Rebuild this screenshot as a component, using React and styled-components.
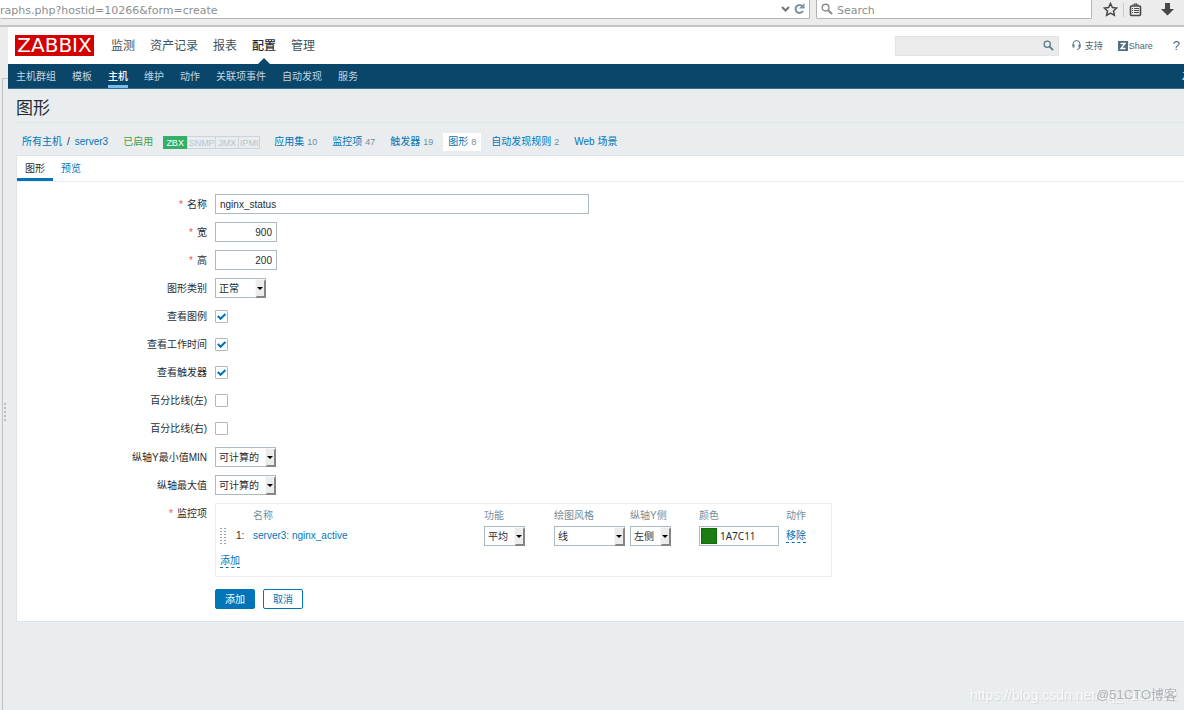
import React, { useState } from "react";
import styled, { createGlobalStyle, css } from "styled-components";

const GlobalStyle = createGlobalStyle`
  * {
    box-sizing: border-box;
  }
  body {
    margin: 0;
    background-color: #e9edf0;
    color: #1f2c33;
    font: 10px/14px "Liberation Sans", "Noto Sans CJK SC", sans-serif;
  }
  a {
    color: #0275b8;
    text-decoration: none;
  }
  input, select, button {
    font: inherit;
    color: inherit;
  }
`;

/* Browser toolbar */

const Toolbar = styled.div`
  display: flex;
  align-items: flex-start;
  height: 27px;
  background-color: #ececec;
  border-bottom: 2px solid #c6c6c6;
  color: #8b8e8f;
  font-family: "DejaVu Sans", sans-serif;
  font-size: 11px;
`;

const ToolbarField = styled.div`
  display: flex;
  align-items: center;
  gap: 4px;
  flex: ${props => props.$grow} 1 0;
  height: 19px;
  padding: 0 4px 0 ${props => (props.$first ? 0 : "4px")};
  background-color: #fff;
  border: 1px solid #b4b4b4;
  border-width: 0 1px 1px ${props => (props.$first ? 0 : "1px")};
  border-radius: 0 0 2px 2px;
  margin-right: 6px;
  input {
    flex: 1;
    min-width: 0;
    height: 18px;
    border: 0;
    padding: 2px 0 0;
    background: none;
    outline: none;
    &::placeholder {
      color: #8b8e8f;
      opacity: 1;
    }
  }
`;

const ToolbarIcons = styled.div`
  display: flex;
  align-items: center;
  gap: 5px;
  height: 19px;
  padding: 0 10px 0 5px;
  color: #484848;
`;

const IconButton = styled.button`
  display: flex;
  padding: 0;
  border: 0;
  background: none;
  margin-left: ${props => (props.$spaced ? "14px" : 0)};
`;

const Separator = styled.span`
  width: 1px;
  height: 14px;
  background-color: #ccc;
`;

/* Page frame */

const Window = styled.div`
  display: flex;
  min-height: calc(100vh - 27px);
`;

const Gutter = styled.div`
  flex: 0 0 8px;
  display: flex;
  padding: 51px 0 0 2px;
  background-color: #ececec;
`;

const Splitter = styled.div`
  flex: 1;
  display: flex;
  align-items: center;
  padding: 36px 0 0 1px;
  background-color: #e9edf0;
  border: solid #c4c4c4;
  border-width: 1px 0 0 1px;
  color: #b9bdbf;
`;

const Page = styled.div`
  flex: 1;
  min-width: 0;
`;

const Header = styled.header`
  display: flex;
  align-items: center;
  height: 37px;
  padding: 0 4px 0 7px;
  background-color: #fff;
  color: #4f6671;
`;

const Logo = styled.a`
  height: 21px;
  width: 79px;
  background-color: #d40000;
  color: #fff;
  font: 20px/21px "DejaVu Sans", sans-serif;
  text-align: center;
`;

const MainMenu = styled.nav`
  display: flex;
  align-self: stretch;
  gap: 15px;
  margin-left: 17px;
  flex: 1;
`;

const MainItem = styled.a`
  display: flex;
  flex-direction: column;
  align-items: center;
  justify-content: space-between;
  padding-top: 10px;
  color: #3f535d;
  font-size: 12px;
  line-height: 18px;
  ${props =>
    props.$active &&
    css`
      color: #1f2c33;
      font-weight: 500;
      &::after {
        content: "";
        border: 6px solid transparent;
        border-top: 0;
        border-bottom-color: #0a466a;
      }
    `}
`;

const GlobalSearch = styled.form`
  display: flex;
  align-items: center;
  width: 164px;
  height: 20px;
  padding: 0 4px;
  background-color: #ebebeb;
  border: 1px solid #dfe4e7;
  color: #5d7b8a;
  input {
    flex: 1;
    min-width: 0;
    border: 0;
    background: none;
    outline: none;
  }
`;

const HeaderLink = styled.a`
  display: flex;
  align-items: center;
  gap: ${props => props.$gap || 0}px;
  margin-left: ${props => props.$space}px;
  color: #4f6671;
  font-size: ${props => (props.$large ? 13 : 9)}px;
`;

const SubMenu = styled.nav`
  display: flex;
  gap: 16px;
  height: 25px;
  padding-left: 8px;
  background-color: #0a466a;
  border-bottom: 1px solid #3b6a87;
  line-height: 26px;
  overflow: hidden;
`;

const SubItem = styled.a`
  height: 24px;
  color: #c3d5e0;
  ${props =>
    props.$active &&
    css`
      color: #fff;
      font-weight: 500;
      border-bottom: 3px solid #78bdf2;
    `}
`;

const ServerName = styled.span`
  margin-left: auto;
  width: 2px;
  white-space: nowrap;
  color: #c3d5e0;
`;

const Title = styled.h1`
  margin: 0 0 0 8px;
  height: 34px;
  border-bottom: 1px solid #dfe4e7;
  font-size: 17px;
  font-weight: 400;
  line-height: 40px;
`;

const Breadcrumbs = styled.div`
  display: flex;
  align-items: center;
  gap: 5px;
  height: 32px;
  padding: 6px 0 0 9px;
`;

const Crumb = styled.span`
  display: flex;
  align-items: center;
  gap: ${props => props.$gap || 3}px;
  height: 18px;
  padding: 0 5px;
  white-space: nowrap;
  background-color: ${props => (props.$selected ? "#fff" : "transparent")};
  small {
    color: #768d99;
    font-size: 9px;
  }
`;

const Enabled = styled.span`
  color: #429e47;
`;

const Badges = styled.span`
  display: flex;
  font-size: 9px;
  line-height: 12px;
`;

const Badge = styled.span`
  width: ${props => props.$width}px;
  height: 13px;
  border: 1px solid ${props => (props.$on ? "#34af67" : "#ccd5d9")};
  margin-right: ${props => (props.$on ? 0 : "-1px")};
  background-color: ${props => (props.$on ? "#34af67" : "transparent")};
  color: ${props => (props.$on ? "#fff" : "#bac4ca")};
  text-align: center;
`;

const Card = styled.main`
  margin-left: 8px;
  background-color: #fff;
  border: 1px solid #dfe4e7;
  border-right: 0;
`;

const Tabs = styled.div`
  display: flex;
  height: 26px;
  border-bottom: 1px solid #ebeef0;
`;

const Tab = styled.a`
  padding: 0 8px;
  line-height: 25px;
  ${props =>
    props.$active &&
    css`
      color: #1f2c33;
      border-bottom: 3px solid #0275b8;
    `}
`;

/* Form */

const Form = styled.form`
  display: grid;
  gap: 8px;
  padding: 12px 0;
`;

const CheckGroup = styled.div`
  display: grid;
  gap: 8px;
  padding-bottom: 1px;
`;

const Row = styled.div`
  display: grid;
  grid-template-columns: 190px minmax(0, 1fr);
  gap: 8px;
  min-height: 20px;
`;

const Label = styled.label`
  height: 20px;
  text-align: right;
  line-height: 22px;
  ${props =>
    props.$required &&
    css`
      &::before {
        content: "*";
        margin-right: 4px;
        color: #e45959;
      }
    `}
`;

const Field = styled.div`
  display: flex;
  align-items: center;
  gap: 8px;
`;

const TextInput = styled.input`
  width: 100%;
  max-width: ${props => props.$width}px;
  height: 20px;
  padding: 0 4px;
  background-color: #fff;
  border: 1px solid #acbbc2;
  text-align: ${props => (props.$right ? "right" : "left")};
`;

const SelectWrap = styled.span`
  position: relative;
  display: inline-flex;
  width: ${props => props.$width}px;
  select {
    appearance: none;
    width: 100%;
    height: 20px;
    padding: 2px 3px 0;
    background-color: #fff;
    border: 1px solid #acbbc2;
    border-radius: 0;
  }
  svg {
    position: absolute;
    top: 1px;
    right: 0;
    pointer-events: none;
  }
`;

const Checkbox = styled.input`
  appearance: none;
  width: 13px;
  height: 13px;
  margin: 0;
  background-color: #fff;
  border: 1px solid #acbbc2;
  border-radius: 1px;
`;

const CheckWrap = styled.span`
  position: relative;
  display: flex;
  svg {
    position: absolute;
    inset: 0;
    pointer-events: none;
  }
`;

const ItemsBox = styled.div`
  width: 100%;
  max-width: 617px;
  border: 1px solid #ebeef0;
  padding-left: 4px;
`;

const ItemsTable = styled.table`
  width: 100%;
  table-layout: fixed;
  border-collapse: collapse;
  th,
  td {
    padding: 0;
    height: 20px;
    text-align: left;
    vertical-align: middle;
    white-space: nowrap;
  }
  th {
    height: 22px;
    padding-top: 2px;
    color: #768d99;
    font-weight: 400;
  }
  td > * {
    vertical-align: middle;
  }
  tfoot td {
    height: 30px;
  }
`;

const Col = styled.col`
  width: ${props => (props.$width ? `${props.$width}px` : "auto")};
`;

const DottedLink = styled.a`
  display: inline-block;
  line-height: 13px;
  border-bottom: 1px dashed #0275b8;
`;

const ColorField = styled.span`
  display: flex;
  align-items: center;
  gap: 3px;
  width: 80px;
  height: 20px;
  padding: 0 1px;
  border: 1px solid #acbbc2;
  input {
    flex: 1;
    min-width: 0;
    padding: 0;
    border: 0;
    outline: none;
    font-family: "Noto Sans", sans-serif;
  }
`;

const Swatch = styled.button`
  width: 16px;
  height: 16px;
  padding: 0;
  border: 1px solid #14690d;
  background-color: #1a7c11;
`;

const DotGrid = styled.svg`
  display: block;
  color: ${props => props.$color};
`;

const Button = styled.button`
  width: 40px;
  height: 20px;
  padding: 1px 0 0;
  border: 1px solid #0275b8;
  border-radius: 2px;
  background-color: ${props => (props.$primary ? "#0275b8" : "#fff")};
  color: ${props => (props.$primary ? "#fff" : "#0275b8")};
`;

const Actions = styled(Field)`
  grid-column: 2;
  margin-top: 4px;
`;

const Watermark = styled.div`
  position: fixed;
  right: 7px;
  bottom: 6px;
  color: ${props => (props.$light ? "#f8fafa" : "#b1b5b8")};
  font-size: ${props => (props.$light ? 14 : 13)}px;
  line-height: 18px;
  text-shadow: ${props => (props.$light ? "1px 1px 1px #d2d6d8" : "none")};
  white-space: nowrap;
  pointer-events: none;
`;

const SearchIcon = ({ size = 12 }) => (
  <svg width={size} height={size} viewBox="0 0 12 12" fill="none" stroke="currentColor">
    <circle cx="4.6" cy="4.6" r="3.4" strokeWidth="1.4" />
    <path d="M7.2 7.2l3.8 3.8" strokeWidth="2" />
  </svg>
);

const Dots = ({ rows, cols, pitch = 3, color = "currentColor" }) => (
  <DotGrid
    $color={color}
    width={cols * 4 - 2}
    height={rows * pitch - 1}
    fill="currentColor"
    aria-hidden="true"
  >
    {Array.from({ length: rows * cols }, (_, i) => (
      <rect
        key={i}
        x={(i % cols) * 4}
        y={Math.floor(i / cols) * pitch}
        width="2"
        height={pitch > 3 ? 2 : 1}
      />
    ))}
  </DotGrid>
);

const Select = ({ width, options, ...rest }) => (
  <SelectWrap $width={width}>
    <select {...rest}>
      {options.map(option => (
        <option key={option}>{option}</option>
      ))}
    </select>
    <svg width="11" height="19" aria-hidden="true">
      <rect width="11" height="19" fill="#ececec" />
      <path d="M0 0h11v1H1v18H0z" fill="#f8f8f8" />
      <path d="M11 0v19H0l2-2h7V2z" fill="#858585" />
      <path d="M2 8h6L5 11z" fill="#000" />
    </svg>
  </SelectWrap>
);

const CheckRow = ({ id, label, initial }) => {
  const [checked, setChecked] = useState(initial);
  return (
    <Row>
      <Label htmlFor={id}>{label}</Label>
      <Field>
        <CheckWrap>
          <Checkbox
            id={id}
            type="checkbox"
            checked={checked}
            onChange={e => setChecked(e.target.checked)}
          />
          {checked && (
            <svg width="13" height="13" fill="none" stroke="#0275b8" strokeWidth="2">
              <path d="M2.8 6l2.8 2.8L10.4 4" />
            </svg>
          )}
        </CheckWrap>
      </Field>
    </Row>
  );
};

const mainItems = ["监测", "资产记录", "报表", "配置", "管理"];
const subItems = ["主机群组", "模板", "主机", "维护", "动作", "关联项事件", "自动发现", "服务"];
const hostLinks = [
  ["应用集", 10],
  ["监控项", 47],
  ["触发器", 19],
  ["图形", 8],
  ["自动发现规则", 2],
  ["Web 场景"]
];
const checks = [
  ["legend", "查看图例", true],
  ["worktime", "查看工作时间", true],
  ["triggers", "查看触发器", true],
  ["percentLeft", "百分比线(左)", false],
  ["percentRight", "百分比线(右)", false]
];

const BrowserBar = () => (
  <Toolbar>
    <ToolbarField $grow={805} $first>
      <input aria-label="Address" defaultValue="raphs.php?hostid=10266&form=create" />
      <svg width="24" height="12" fill="none" stroke="#6f7678" strokeWidth="2">
        <path d="M1 4l3.5 3.5L8 4" />
        <path d="M21.5 3.2A4 4 0 1 0 22 8" stroke="#7d93a3" />
        <path d="M23.5 0v5.5H18z" fill="#7d93a3" stroke="none" />
      </svg>
    </ToolbarField>
    <ToolbarField $grow={266}>
      <SearchIcon />
      <input aria-label="Search" placeholder="Search" />
    </ToolbarField>
    <ToolbarIcons>
      <IconButton aria-label="Bookmark">
        <svg width="15" height="15" fill="none" stroke="currentColor" strokeWidth="1.5">
          <path d="M7.5 1.5l1.900 4 4.300.5-3.200 3 .9 4.400-3.900-2.200-3.900 2.200.9-4.400-3.200-3 4.300-.5z" />
        </svg>
      </IconButton>
      <Separator />
      <IconButton aria-label="Bookmarks list">
        <svg width="13" height="14" fill="none" stroke="currentColor">
          <rect x="1.5" y="3" width="10" height="9.5" rx="1" strokeWidth="1.6" />
          <path d="M4 2.8V2h1.5V1h2v1H9v.8" strokeWidth="1.2" />
          <path d="M3 5.5h1M5 5.5h5M3 7.5h1M5 7.5h5M3 9.5h1M5 9.5h5" />
        </svg>
      </IconButton>
      <IconButton aria-label="Downloads" $spaced>
        <svg width="13" height="13" fill="currentColor">
          <path d="M4 0h5v6h4l-6.5 6.5L0 6h4z" />
        </svg>
      </IconButton>
    </ToolbarIcons>
  </Toolbar>
);

const TopHeader = () => (
  <Header>
    <Logo href="#">ZABBIX</Logo>
    <MainMenu>
      {mainItems.map(item => (
        <MainItem key={item} href="#" $active={item === "配置"}>
          {item}
        </MainItem>
      ))}
    </MainMenu>
    <GlobalSearch>
      <input aria-label="搜索" />
      <IconButton type="button" aria-label="搜索">
        <SearchIcon size={11} />
      </IconButton>
    </GlobalSearch>
    <HeaderLink href="#" $space={13} $gap={4}>
      <svg width="9" height="11" fill="none" stroke="#5d7b8a">
        <path d="M1 6V4a3.5 3.5 0 0 1 7 0v2.5Q8 9.5 5 9.5" />
        <path d="M1.5 4.5v3M7.5 4.5v3" strokeWidth="2" />
      </svg>
      支持
    </HeaderLink>
    <HeaderLink href="#" $space={15} $gap={1}>
      <svg width="10" height="10">
        <rect width="10" height="10" fill="#4f6f80" />
        <path d="M2.5 2.5H7L3 7.5h4.5" fill="none" stroke="#fff" strokeWidth="1.4" />
      </svg>
      Share
    </HeaderLink>
    <HeaderLink href="#" $space={20} $large>
      ?
    </HeaderLink>
  </Header>
);

const ItemRow = () => (
  <tr>
    <td>
      <Dots rows={6} cols={2} color="#8fa1ab" />
    </td>
    <td>1:</td>
    <td>
      <a href="#">server3: nginx_active</a>
    </td>
    <td>
      <Select width={41} options={["平均"]} aria-label="功能" />
    </td>
    <td>
      <Select width={71} options={["线"]} aria-label="绘图风格" />
    </td>
    <td>
      <Select width={41} options={["左侧"]} aria-label="纵轴Y侧" />
    </td>
    <td>
      <ColorField>
        <Swatch type="button" aria-label="选择颜色" />
        <input aria-label="颜色" defaultValue="1A7C11" />
      </ColorField>
    </td>
    <td>
      <DottedLink href="#">移除</DottedLink>
    </td>
  </tr>
);

const App = () => (
  <>
    <GlobalStyle />
    <BrowserBar />
    <Window>
      <Gutter>
        <Splitter>
          <Dots rows={5} cols={1} pitch={4} />
        </Splitter>
      </Gutter>
      <Page>
        <TopHeader />
        <SubMenu>
          {subItems.map(item => (
            <SubItem key={item} href="#" $active={item === "主机"}>
              {item}
            </SubItem>
          ))}
          <ServerName>Z</ServerName>
        </SubMenu>
        <Title>图形</Title>
        <Breadcrumbs>
          <Crumb $gap={5}>
            <a href="#">所有主机</a>
            <span>/</span>
            <a href="#">server3</a>
          </Crumb>
          <Crumb $gap={10}>
            <Enabled>已启用</Enabled>
            <Badges>
              <Badge $on $width={24}>ZBX</Badge>
              <Badge $width={29}>SNMP</Badge>
              <Badge $width={24}>JMX</Badge>
              <Badge $width={22}>IPMI</Badge>
            </Badges>
          </Crumb>
          {hostLinks.map(([name, count]) => (
            <Crumb key={name} $selected={name === "图形"}>
              <a href="#">{name}</a>
              {count && <small>{count}</small>}
            </Crumb>
          ))}
        </Breadcrumbs>
        <Card>
          <Tabs>
            <Tab href="#" $active>图形</Tab>
            <Tab href="#">预览</Tab>
          </Tabs>
          <Form onSubmit={e => e.preventDefault()}>
            <Row>
              <Label htmlFor="name" $required>名称</Label>
              <Field>
                <TextInput id="name" $width={374} defaultValue="nginx_status" />
              </Field>
            </Row>
            <Row>
              <Label htmlFor="width" $required>宽</Label>
              <Field>
                <TextInput id="width" $width={62} $right defaultValue="900" />
              </Field>
            </Row>
            <Row>
              <Label htmlFor="height" $required>高</Label>
              <Field>
                <TextInput id="height" $width={62} $right defaultValue="200" />
              </Field>
            </Row>
            <Row>
              <Label htmlFor="type">图形类别</Label>
              <Field>
                <Select id="type" width={51} options={["正常"]} />
              </Field>
            </Row>
            <CheckGroup>
              {checks.map(([id, label, initial]) => (
                <CheckRow key={id} id={id} label={label} initial={initial} />
              ))}
            </CheckGroup>
            <Row>
              <Label htmlFor="ymin">纵轴Y最小值MIN</Label>
              <Field>
                <Select id="ymin" width={61} options={["可计算的"]} />
              </Field>
            </Row>
            <Row>
              <Label htmlFor="ymax">纵轴最大值</Label>
              <Field>
                <Select id="ymax" width={61} options={["可计算的"]} />
              </Field>
            </Row>
            <Row>
              <Label as="span" $required>监控项</Label>
              <ItemsBox>
                <ItemsTable aria-label="监控项">
                  <colgroup>
                    <Col $width={16} />
                    <Col $width={17} />
                    <Col />
                    <Col $width={70} />
                    <Col $width={76} />
                    <Col $width={69} />
                    <Col $width={87} />
                    <Col $width={45} />
                  </colgroup>
                  <thead>
                    <tr>
                      <th />
                      <th />
                      <th>名称</th>
                      <th>功能</th>
                      <th>绘图风格</th>
                      <th>纵轴Y侧</th>
                      <th>颜色</th>
                      <th>动作</th>
                    </tr>
                  </thead>
                  <tbody>
                    <ItemRow />
                  </tbody>
                  <tfoot>
                    <tr>
                      <td colSpan="8">
                        <DottedLink href="#">添加</DottedLink>
                      </td>
                    </tr>
                  </tfoot>
                </ItemsTable>
              </ItemsBox>
            </Row>
            <Row>
              <Actions>
                <Button type="submit" $primary>添加</Button>
                <Button type="button">取消</Button>
              </Actions>
            </Row>
          </Form>
        </Card>
      </Page>
    </Window>
    <Watermark $light>https://blog.csdn.net/qq_4183862</Watermark>
    <Watermark>@51CTO博客</Watermark>
  </>
);

export default App;
